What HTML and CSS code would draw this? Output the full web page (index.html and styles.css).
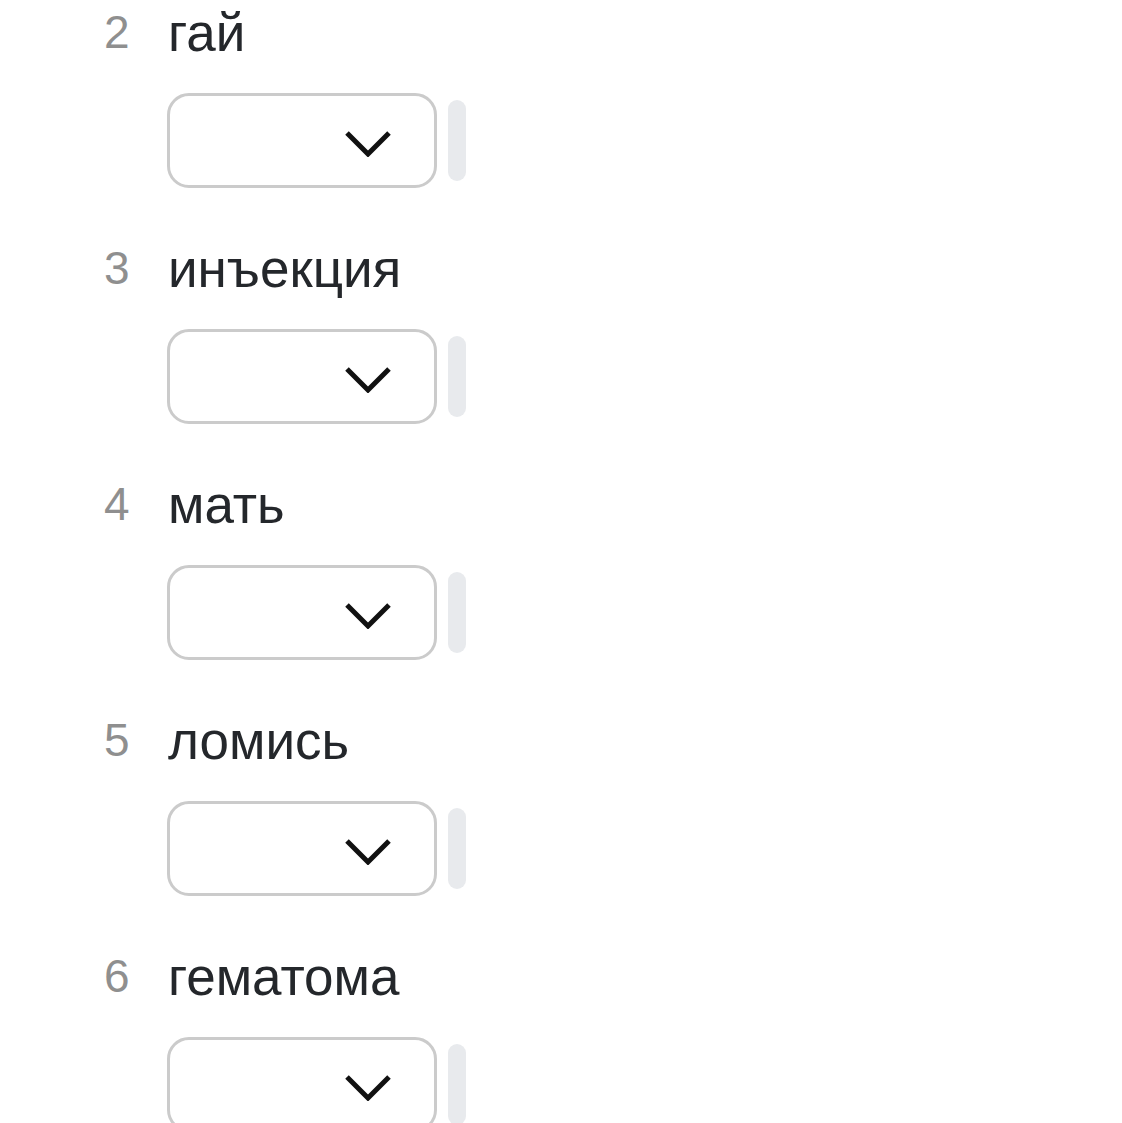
FILE: index.html
```html
<!DOCTYPE html>
<html lang="ru">
<head>
    <meta charset="UTF-8">
    <meta name="viewport" content="width=device-width, initial-scale=1.0">
    <title>Слова</title>
    <link rel="stylesheet" href="styles.css">
</head>
<body>
    <ol class="word-list">
        <li class="word-item">
            <div class="word-head">
                <span class="word-num">2</span>
                <span class="word-text">гай</span>
            </div>
            <div class="word-controls">
                <div class="select-box">
                    <svg class="chevron" viewBox="0 0 46 26" width="46" height="26"><path d="M2 2 L23 23 L44 2" /></svg>
                </div>
                <div class="handle"></div>
            </div>
        </li>
        <li class="word-item">
            <div class="word-head">
                <span class="word-num">3</span>
                <span class="word-text">инъекция</span>
            </div>
            <div class="word-controls">
                <div class="select-box">
                    <svg class="chevron" viewBox="0 0 46 26" width="46" height="26"><path d="M2 2 L23 23 L44 2" /></svg>
                </div>
                <div class="handle"></div>
            </div>
        </li>
        <li class="word-item">
            <div class="word-head">
                <span class="word-num">4</span>
                <span class="word-text">мать</span>
            </div>
            <div class="word-controls">
                <div class="select-box">
                    <svg class="chevron" viewBox="0 0 46 26" width="46" height="26"><path d="M2 2 L23 23 L44 2" /></svg>
                </div>
                <div class="handle"></div>
            </div>
        </li>
        <li class="word-item">
            <div class="word-head">
                <span class="word-num">5</span>
                <span class="word-text">ломись</span>
            </div>
            <div class="word-controls">
                <div class="select-box">
                    <svg class="chevron" viewBox="0 0 46 26" width="46" height="26"><path d="M2 2 L23 23 L44 2" /></svg>
                </div>
                <div class="handle"></div>
            </div>
        </li>
        <li class="word-item">
            <div class="word-head">
                <span class="word-num">6</span>
                <span class="word-text">гематома</span>
            </div>
            <div class="word-controls">
                <div class="select-box">
                    <svg class="chevron" viewBox="0 0 46 26" width="46" height="26"><path d="M2 2 L23 23 L44 2" /></svg>
                </div>
                <div class="handle"></div>
            </div>
        </li>
    </ol>
</body>
</html>
```

FILE: styles.css
```css
body {
    margin: 0;
    padding: 3px 0 0 104px;
    background-color: #fff;
    font-family: "Liberation Sans", Arial, sans-serif;
}
.word-list {
    list-style: none;
    margin: 0;
    padding: 0;
}
.word-item {
    display: flex;
    flex-direction: column;
    gap: 30px;
    margin-bottom: 51px;
}
.word-head {
    display: flex;
    align-items: flex-start;
    height: 60px;
}
.word-num {
    width: 64px;
    font-size: 46px;
    line-height: 58px;
    color: #8f8f8f;
}
.word-text {
    font-size: 53px;
    line-height: 60px;
    color: #24272b;
}
.word-controls {
    display: flex;
    align-items: center;
    gap: 11px;
    margin-left: 63px;
}
.select-box {
    box-sizing: border-box;
    width: 270px;
    height: 95px;
    border: 3px solid #cbcbcb;
    border-radius: 22px;
    display: flex;
    align-items: center;
    justify-content: flex-end;
    padding: 6px 43px 0 0;
}
.chevron path {
    fill: none;
    stroke: #111;
    stroke-width: 5;
}
.handle {
    width: 18px;
    height: 81px;
    border-radius: 9px;
    background-color: #e8eaed;
}
```
